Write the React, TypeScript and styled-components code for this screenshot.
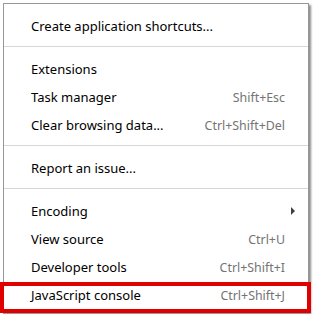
import styled, { createGlobalStyle } from "styled-components";

const GlobalStyle = createGlobalStyle`
  html, body {
    margin: 0;
    padding: 0;
    background: #ffffff;
  }
`;

const Page = styled.div`
  padding: 3px 0 0 3px;
  font-family: "Noto Sans", "Open Sans", sans-serif;
`;

const Menu = styled.div`
  position: relative;
  width: 304px;
  border: 1px solid #979797;
  background: #ffffff;
  padding: 8px 0 4px;
  box-shadow: 2px 2px 2px rgba(0, 0, 0, 0.45);
`;

const Item = styled.div<{ $highlight?: boolean }>`
  position: relative;
  display: flex;
  align-items: center;
  justify-content: space-between;
  height: 28px;
  padding: 0 23px 0 27px;
  font-size: 13px;
  color: #000000;

  ${({ $highlight }) =>
    $highlight &&
    `
    &::after {
      content: "";
      position: absolute;
      left: -4px;
      right: -3px;
      top: 1px;
      bottom: -4px;
      border: 4px solid #e00000;
    }
  `}
`;

const Label = styled.span``;

const Shortcut = styled.span`
  color: #747474;
  font-size: 12.4px;
`;

const Arrow = styled.span`
  width: 0;
  height: 0;
  margin-right: -10px;
  border-top: 4px solid transparent;
  border-bottom: 4px solid transparent;
  border-left: 4px solid #404040;
`;

const Separator = styled.div`
  height: 1px;
  margin: 6px 0 8px;
  background: #d7d7d7;
`;

type Entry =
  | { label: string; shortcut?: string; submenu?: boolean; highlight?: boolean }
  | "sep";

const entries: Entry[] = [
  { label: "Create application shortcuts..." },
  "sep",
  { label: "Extensions" },
  { label: "Task manager", shortcut: "Shift+Esc" },
  { label: "Clear browsing data...", shortcut: "Ctrl+Shift+Del" },
  "sep",
  { label: "Report an issue..." },
  "sep",
  { label: "Encoding", submenu: true },
  { label: "View source", shortcut: "Ctrl+U" },
  { label: "Developer tools", shortcut: "Ctrl+Shift+I" },
  { label: "JavaScript console", shortcut: "Ctrl+Shift+J", highlight: true },
];

export default function App() {
  return (
    <>
      <GlobalStyle />
      <Page>
        <Menu>
          {entries.map((e, i) =>
            e === "sep" ? (
              <Separator key={i} />
            ) : (
              <Item key={i} $highlight={e.highlight}>
                <Label>{e.label}</Label>
                {e.shortcut && <Shortcut>{e.shortcut}</Shortcut>}
                {e.submenu && <Arrow />}
              </Item>
            )
          )}
        </Menu>
      </Page>
    </>
  );
}
